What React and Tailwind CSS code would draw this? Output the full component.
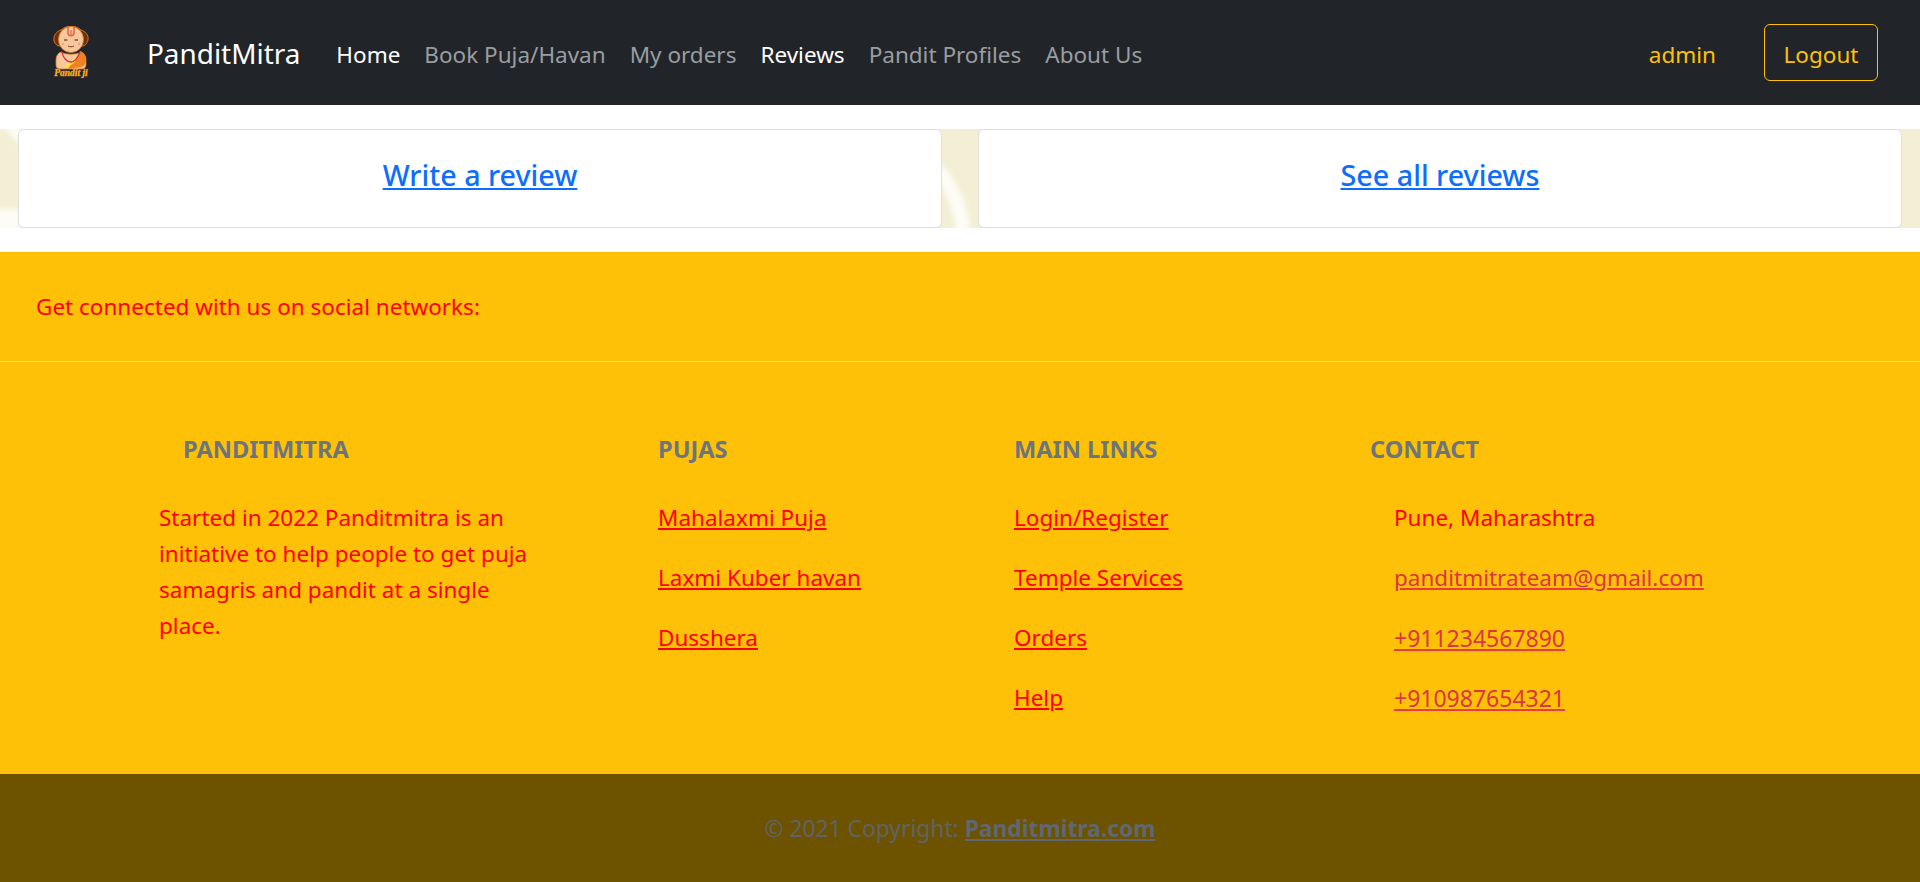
const font = { fontFamily: '"Noto Sans", sans-serif' };

function Logo() {
  return (
    <svg width="36" height="54" viewBox="0 0 36 54" className="shrink-0">
      <path d="M1 15C0 9 4 5 8 4c5-5 15-5 20 0 4 1 8 5 7 10-1 4-3 6-6 6H7c-3 0-5-2-6-5z" fill="#6b3410" stroke="#d96f1e" strokeWidth="1" />
      <ellipse cx="18" cy="13.500" rx="12.500" ry="13" fill="#f8c79e" stroke="#d97a2b" strokeWidth="0.800" />
      <path d="M15 1v6c0 3.500 6 3.500 6 0V1" fill="none" stroke="#e8632a" strokeWidth="1.500" />
      <path d="M18 4v5" stroke="#d92b45" strokeWidth="0.800" />
      <path d="M11 14h3.500M21.500 14h3.500" stroke="#3a2010" strokeWidth="1" />
      <path d="M15 20c2 1 4 1 6 0" stroke="#8a3b1c" strokeWidth="1" fill="none" />
      <circle cx="10" cy="18" r="1.200" fill="#f0a184" />
      <circle cx="26" cy="18" r="1.200" fill="#f0a184" />
      <path d="M8 26c-3 1-5 4-5 8v5c0 3 2 4 5 4h20c4 0 5-2 5-5v-4c0-4-2-7-5-8-5 3-15 3-20 0z" fill="#f8c79e" stroke="#d97a2b" strokeWidth="0.800" />
      <path d="M27 25c3 1 6 5 6 9 0 4-2 6-5 7l-13 2 4-7c4-2 7-6 8-11z" fill="#ee8121" />
      <path d="M11 40l13-10-2 6-8 6z" fill="#ffe04d" />
      <path d="M9 26c1 6 5 10 9 10s7-5 9-10" fill="none" stroke="#d92b45" strokeWidth="1.300" />
      <text x="18" y="50" textAnchor="middle" fontFamily="Liberation Serif, serif" fontStyle="italic" fontWeight="700" fontSize="9.500" fill="#ffd21f" stroke="#f0871a" strokeWidth="0.400">Pandit ji</text>
    </svg>
  );
}

function Nav({ children, active }) {
  return <a href="#" className={active ? "text-white" : "text-[#9a9da0]"}>{children}</a>;
}

function Heading({ children, className = "" }) {
  return <h6 className={"m-0 text-[23.6px] leading-[29px] font-bold uppercase text-[#6c757d] pt-[1px] " + className}>{children}</h6>;
}

function FooterLink({ children, pink, className = "" }) {
  return <p className="m-0 mb-[24px] leading-[36px] h-[36px]"><a href="#" className={"underline whitespace-nowrap " + (pink ? "text-[#dc3545] decoration-[#ef3a3a] " : "text-[#ff0000] ") + className}>{children}</a></p>;
}

export default function App() {
  return (
    <div style={font} className="w-full min-h-[882px] bg-white text-[22.5px] overflow-hidden">
      <nav className="h-[105px] bg-[#212529] flex items-center pl-[53px] pr-[42px]">
        <Logo />
        <a href="#" className="ml-[58px] text-[27.9px] text-white whitespace-nowrap pt-[2px]">PanditMitra</a>
        <div className="ml-[36px] flex gap-[24px] whitespace-nowrap pt-[4px]">
          <Nav active>Home</Nav>
          <Nav>Book Puja/Havan</Nav>
          <Nav>My orders</Nav>
          <Nav active>Reviews</Nav>
          <Nav>Pandit Profiles</Nav>
          <Nav>About Us</Nav>
        </div>
        <span className="ml-auto text-[#ffc107] pt-[4px]">admin</span>
        <button className="ml-[48px] w-[114px] h-[57px] rounded-[6px] border border-[#ffc107] text-[#ffc107] pt-[4px]">Logout</button>
      </nav>

      <main className="pt-[24px] pb-[24px]">
        <div className="relative h-[99px] bg-[#f3efd4] px-[18px] flex gap-[36px]">
          <svg className="absolute inset-0 w-full h-full" viewBox="0 0 1920 99" preserveAspectRatio="none">
            <defs>
              <filter id="soft"><feGaussianBlur stdDeviation="2.500" /></filter>
            </defs>
            <path d="M935 30c18 14 32 40 36 72h-15c-3-22-10-40-21-52z" fill="#fdfcf5" filter="url(#soft)" />
            <path d="M-5 -5h26v22L6 0z" fill="#fdfcf5" filter="url(#soft)" />
            <path d="M-5 80h26v25H-5z" fill="#fdfcf5" filter="url(#soft)" />
          </svg>
          {["Write a review", "See all reviews"].map((t) => (
            <div key={t} className="relative flex-1 bg-white border border-[#dfdfdf] rounded-[6px] flex items-center justify-center">
              <a href="#" className="text-[#0d6efd] text-[28.7px] font-medium underline -mt-[8px]">{t}</a>
            </div>
          ))}
        </div>
      </main>

      <footer className="bg-[#ffc107] text-[#ff0000]">
        <div className="h-[110px] pl-[36px] flex items-center border-b border-[#ffe083]">
          <span className="mt-[1px]">Get connected with us on social networks:</span>
        </div>
        <div className="h-[412px] pl-[159px] pt-[72px] flex">
          <div className="w-[499px]">
            <Heading className="pl-[24px] mb-[36px]">PanditMitra</Heading>
            <p className="m-0 w-[385px] leading-[36px]">Started in 2022 Panditmitra is an initiative to help people to get puja samagris and pandit at a single place.</p>
          </div>
          <div className="w-[356px]">
            <Heading className="mb-[36px]">Pujas</Heading>
            <FooterLink>Mahalaxmi Puja</FooterLink>
            <FooterLink>Laxmi Kuber havan</FooterLink>
            <FooterLink>Dusshera</FooterLink>
          </div>
          <div className="w-[356px]">
            <Heading className="mb-[36px]">Main Links</Heading>
            <FooterLink>Login/Register</FooterLink>
            <FooterLink>Temple Services</FooterLink>
            <FooterLink>Orders</FooterLink>
            <FooterLink>Help</FooterLink>
          </div>
          <div>
            <Heading className="mb-[36px]">Contact</Heading>
            <div className="pl-[24px]">
              <p className="m-0 mb-[24px] leading-[36px] h-[36px]">Pune, Maharashtra</p>
              <FooterLink pink>panditmitrateam@gmail.com</FooterLink>
              <FooterLink pink className="text-[23px]">+911234567890</FooterLink>
              <FooterLink pink className="text-[23px]">+910987654321</FooterLink>
            </div>
          </div>
        </div>
        <div className="h-[108px] bg-[#6d5300] flex items-center justify-center text-[#5f6368] text-[22.8px]">
          <span className="pt-[2px]">© 2021 Copyright: <a href="#" className="font-bold underline text-[#5f6772]">Panditmitra.com</a></span>
        </div>
      </footer>
    </div>
  );
}
